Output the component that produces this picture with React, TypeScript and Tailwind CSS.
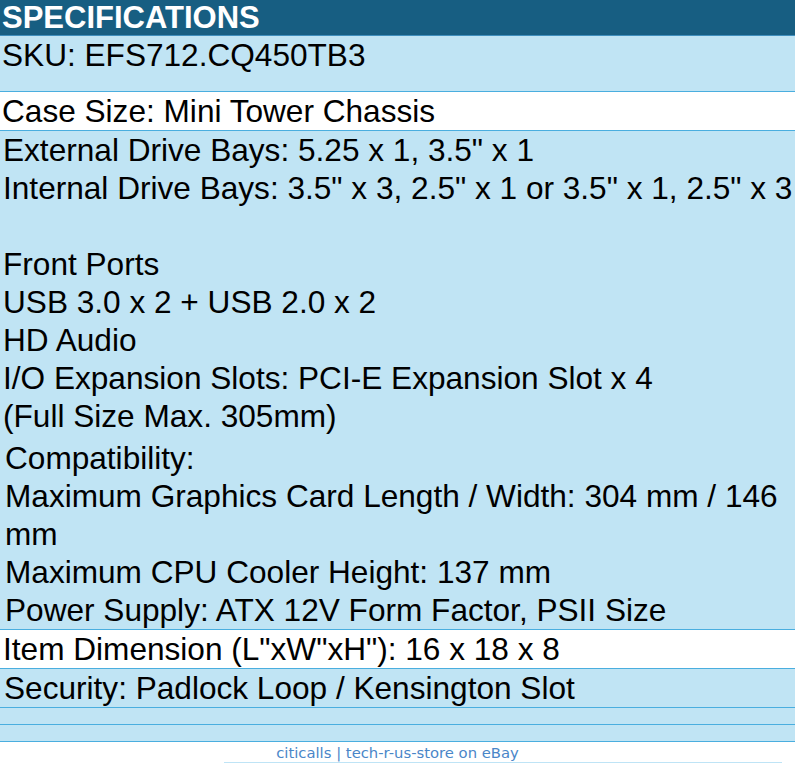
import React from 'react';

const specs1 = [
  'External Drive Bays: 5.25 x 1, 3.5" x 1',
  'Internal Drive Bays: 3.5" x 3, 2.5" x 1 or 3.5" x 1, 2.5" x 3',
  '',
  'Front Ports',
  'USB 3.0 x 2 + USB 2.0 x 2',
  'HD Audio',
  'I/O Expansion Slots: PCI-E Expansion Slot x 4',
  '(Full Size Max. 305mm)',
];

const specs2 = [
  'Compatibility:',
  'Maximum Graphics Card Length / Width: 304 mm / 146',
  'mm',
  'Maximum CPU Cooler Height: 137 mm',
  'Power Supply: ATX 12V Form Factor, PSII Size',
];

function Line({ text }: { text: string }) {
  return <div className="h-[38px] whitespace-nowrap">{text || '\u00a0'}</div>;
}

export default function App() {
  return (
    <div className="w-[795px] min-h-[763px] bg-white font-['Liberation_Sans',Arial,sans-serif] text-black">
      {/* Header */}
      <div className="h-[36px] bg-[#175e82] border-b border-[#3f8fbe] pl-[2px] text-[31px] font-bold leading-[35px] text-white">
        SPECIFICATIONS
      </div>

      <div className="text-[31.6px] leading-[38px]">
        <div className="h-[56px] bg-[#c0e4f4] border-b border-[#4aaedf] pl-[2px] whitespace-nowrap">
          SKU: EFS712.CQ450TB3
        </div>

        <div className="h-[39px] bg-white border-b border-[#4aaedf] pl-[2px] whitespace-nowrap">
          Case Size: Mini Tower Chassis
        </div>

        <div className="bg-[#c0e4f4] border-b border-[#4aaedf]">
          <div className="pl-[3px]">
            {specs1.map((t, i) => (
              <Line key={i} text={t} />
            ))}
          </div>
          <div className="mt-[4px] pl-[5px]">
            {specs2.map((t, i) => (
              <Line key={i} text={t} />
            ))}
          </div>
        </div>

        <div className="h-[39px] bg-white border-b border-[#4aaedf] pl-[3px] whitespace-nowrap">
          Item Dimension (L"xW"xH"): 16 x 18 x 8
        </div>

        <div className="h-[39px] bg-[#c0e4f4] border-b border-[#4aaedf] pl-[4px] whitespace-nowrap">
          Security: Padlock Loop / Kensington Slot
        </div>

        <div className="h-[17px] bg-[#c0e4f4] border-b border-[#4aaedf]" />
        <div className="h-[17px] bg-[#c0e4f4] border-b border-[#4aaedf]" />
      </div>

      {/* Footer */}
      <div className="pt-[2px] text-center font-['DejaVu_Sans',Verdana,sans-serif] text-[14.8px] leading-[18px] text-[#4a86c8]">
        citicalls | tech-r-us-store on eBay
      </div>
      <div className="ml-[224px] w-[558px] border-t border-[#bfe4f6]" />
    </div>
  );
}
